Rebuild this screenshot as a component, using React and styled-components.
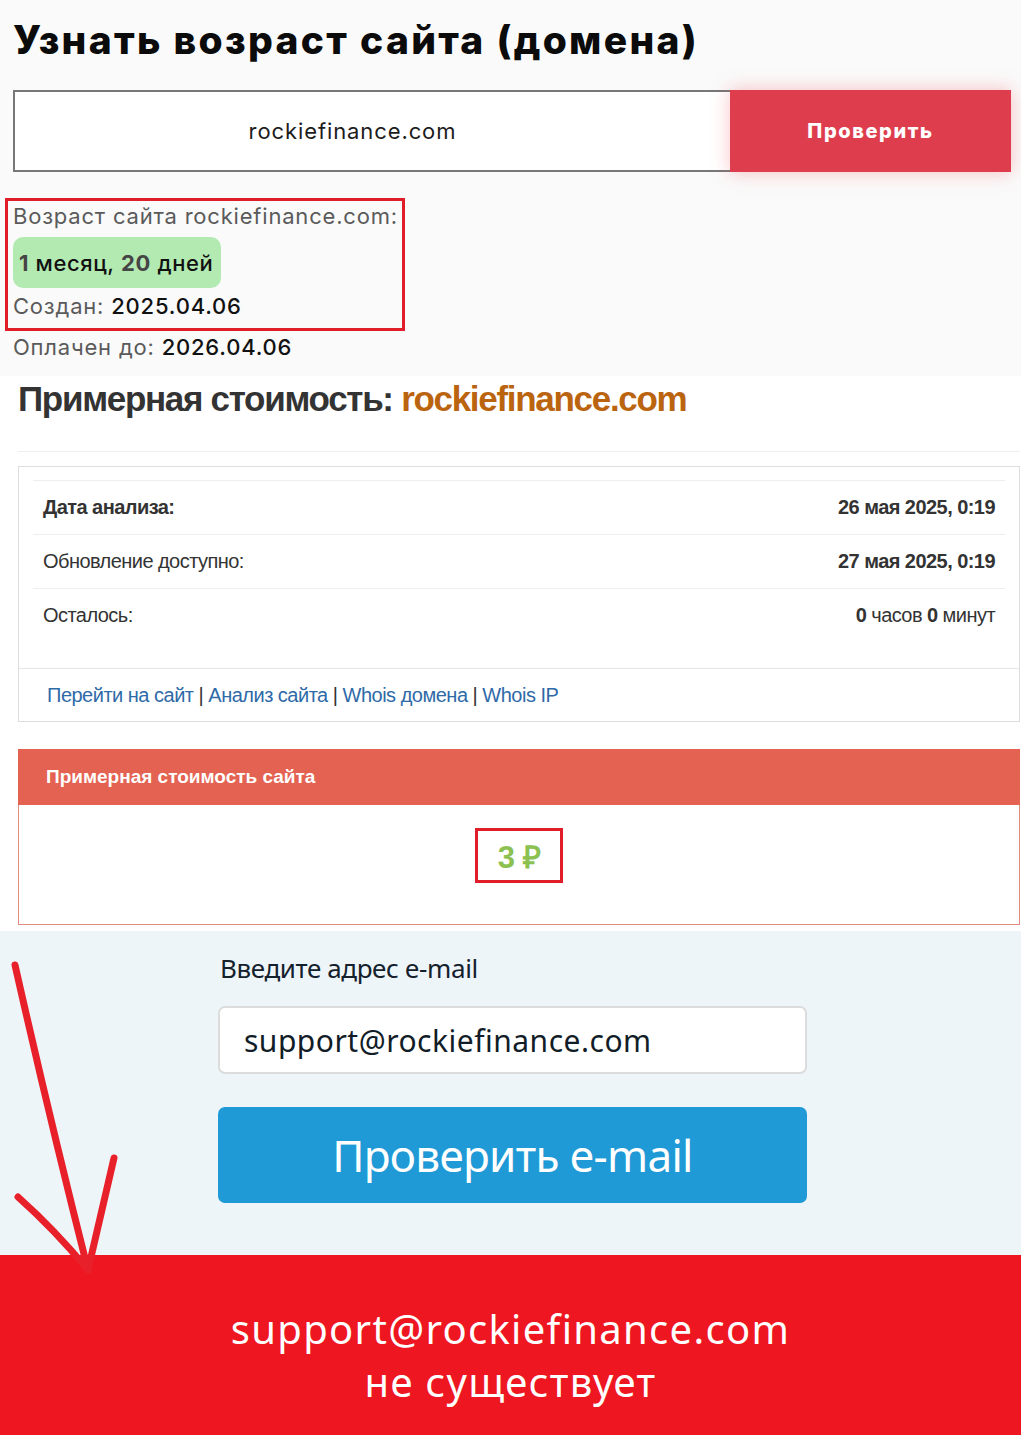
import React from 'react';
import styled, { createGlobalStyle } from 'styled-components';

const GlobalStyle = createGlobalStyle`
    body {
        margin: 0;
        background: #fafafa;
        font-family: Inter, "Open Sans", sans-serif;
    }
    * {
        box-sizing: border-box;
    }
`;

const Page = styled.div`
    position: relative;
    width: 1021px;
    min-height: 1435px;
    overflow: hidden;
`;

// --- Age checker ---
const AgeSection = styled.section`
    background: #fafafa;
    padding: 16px 10px 13px 13px;
`;

const Title = styled.h1`
    margin: 0;
    font-family: Inter, sans-serif;
    font-weight: 800;
    font-size: 39px;
    line-height: 48px;
    color: #0b0b0b;
    letter-spacing: 2.3px;
`;

const SearchRow = styled.form`
    display: flex;
    margin-top: 26px;
    height: 82px;
`;

const DomainInput = styled.div`
    flex: 1;
    display: flex;
    align-items: center;
    justify-content: center;
    padding-right: 40px;
    background: #fff;
    border: 2px solid #777;
    border-right: none;
    font-size: 22px;
    letter-spacing: 0.9px;
    color: #1c1c1c;
`;

const CheckButton = styled.button`
    width: 281px;
    border: none;
    background: #dd3d4d;
    color: #fff;
    font-family: Inter, sans-serif;
    font-weight: 800;
    font-size: 20px;
    letter-spacing: 1.6px;
    box-shadow: 0 0 18px rgba(240, 80, 90, 0.35);
`;

const Highlight = styled.div`
    width: 400px;
    margin: 26px 0 0 -8px;
    border: 3px solid #e01e2a;
    padding: 0 5px 3px;
`;

const InfoLine = styled.div`
    font-size: 22px;
    line-height: ${(p) => p.$lh || 30}px;
    letter-spacing: 0.8px;
    color: #5a5a5a;
    white-space: nowrap;

    b {
        font-weight: 500;
        color: #111;
    }
`;

const AgeBadge = styled.div`
    display: inline-flex;
    align-items: center;
    height: 51px;
    margin-top: 6px;
    padding: 0 8px 0 6px;
    background: #b3eab2;
    border-radius: 10px;
    font-size: 22px;
    font-weight: 500;
    letter-spacing: 0.6px;
    color: #111;

    strong {
        color: #454545;
        font-weight: 700;
    }
`;

// --- Price estimate ---
const PriceSection = styled.section`
    background: #fff;
    padding: 3px 1px 6px 18px;
    font-family: "Liberation Sans", Arial, sans-serif;
`;

const PriceHeading = styled.h2`
    margin: 0;
    font-size: 35px;
    line-height: 40px;
    font-weight: 700;
    letter-spacing: -1.3px;
    color: #333;

    span {
        color: #bb6410;
    }
`;

const Rule = styled.hr`
    margin: 32px 0 14px;
    border: none;
    border-top: 1px solid #eee;
`;

const Card = styled.div`
    background: #fff;
    border: 1px solid #ddd;
`;

const Table = styled.div`
    padding: 13px 14px 26px;
`;

const TableRow = styled.div`
    display: flex;
    justify-content: space-between;
    align-items: center;
    height: 54px;
    padding: 0 10px;
    border-top: 1px solid #eee;
    font-size: 20px;
    letter-spacing: -0.55px;
    color: #333;
    font-weight: ${(p) => (p.$bold ? 700 : 400)};

    b {
        font-weight: 700;
    }
`;

const Value = styled.span`
    font-weight: ${(p) => (p.$bold ? 700 : 400)};
`;

const CardFooter = styled.div`
    height: 53px;
    display: flex;
    align-items: center;
    padding: 0 28px;
    border-top: 1px solid #e6e6e6;
    font-size: 20px;
    letter-spacing: -0.5px;
    color: #333;

    a {
        color: #2f6aa8;
        text-decoration: none;
    }
`;

const CostCard = styled.div`
    margin-top: 27px;
`;

const CostHeader = styled.div`
    height: 56px;
    display: flex;
    align-items: center;
    padding: 0 28px;
    background: #e46251;
    color: #fff;
    font-weight: 700;
    font-size: 19px;
`;

const CostBody = styled.div`
    height: 120px;
    display: flex;
    justify-content: center;
    padding-top: 23px;
    border: 1px solid #e08a80;
    border-top: none;
`;

const CostValue = styled.div`
    width: 88px;
    height: 55px;
    display: flex;
    align-items: center;
    justify-content: center;
    border: 3px solid #e01e2a;
    color: #8cc152;
    font-weight: 700;
    font-size: 31px;
    letter-spacing: -0.5px;
`;

// --- Email checker ---
const EmailSection = styled.section`
    background: #eef5f9;
    padding: 22px 0 52px 218px;
    font-family: "Noto Sans", "Open Sans", sans-serif;
`;

const EmailColumn = styled.div`
    width: 589px;
`;

const EmailLabel = styled.label`
    display: block;
    padding-left: 2px;
    font-size: 26px;
    line-height: 30px;
    color: #14212d;
    letter-spacing: -0.4px;
`;

const EmailInput = styled.div`
    height: 68px;
    margin-top: 23px;
    display: flex;
    align-items: center;
    padding: 0 24px;
    background: #fff;
    border: 2px solid #dcdcdc;
    border-radius: 7px;
    font-size: 30px;
    color: #121d28;
    letter-spacing: 0.5px;
`;

const EmailButton = styled.button`
    width: 100%;
    height: 96px;
    margin-top: 33px;
    border: none;
    border-radius: 7px;
    background: #1f9ad6;
    color: #fff;
    font-family: "Noto Sans", "Open Sans", sans-serif;
    font-size: 44px;
    letter-spacing: -0.7px;
`;

const ResultBanner = styled.section`
    background: #ee1620;
    padding: 47px 0 27px;
    text-align: center;
    color: #fff;
    font-family: "Noto Sans", "Open Sans", sans-serif;
    font-size: 40px;
    line-height: 53px;
    letter-spacing: 1.3px;
`;

const Arrow = styled.svg`
    position: absolute;
    left: 0;
    top: 950px;
    pointer-events: none;
`;

export default function App() {
    return (
        <Page>
            <GlobalStyle />
            <AgeSection>
                <Title>Узнать возраст сайта (домена)</Title>
                <SearchRow onSubmit={(e) => e.preventDefault()}>
                    <DomainInput>rockiefinance.com</DomainInput>
                    <CheckButton type="submit">Проверить</CheckButton>
                </SearchRow>
                <Highlight>
                    <InfoLine>Возраст сайта rockiefinance.com:</InfoLine>
                    <AgeBadge>
                        <strong>1</strong>&nbsp;месяц,&nbsp;<strong>20</strong>&nbsp;дней
                    </AgeBadge>
                    <InfoLine $lh={37}>
                        Создан: <b>2025.04.06</b>
                    </InfoLine>
                </Highlight>
                <InfoLine $lh={32}>
                    Оплачен до: <b>2026.04.06</b>
                </InfoLine>
            </AgeSection>

            <PriceSection>
                <PriceHeading>
                    Примерная стоимость: <span>rockiefinance.com</span>
                </PriceHeading>
                <Rule />
                <Card>
                    <Table>
                        <TableRow $bold>
                            <span>Дата анализа:</span>
                            <Value $bold>26 мая 2025, 0:19</Value>
                        </TableRow>
                        <TableRow>
                            <span>Обновление доступно:</span>
                            <Value $bold>27 мая 2025, 0:19</Value>
                        </TableRow>
                        <TableRow>
                            <span>Осталось:</span>
                            <Value>
                                <b>0</b> часов <b>0</b> минут
                            </Value>
                        </TableRow>
                    </Table>
                    <CardFooter>
                        <a href="#site">Перейти на сайт</a>&nbsp;|&nbsp;
                        <a href="#analysis">Анализ сайта</a>&nbsp;|&nbsp;
                        <a href="#whois">Whois домена</a>&nbsp;|&nbsp;
                        <a href="#ip">Whois IP</a>
                    </CardFooter>
                </Card>
                <CostCard>
                    <CostHeader>Примерная стоимость сайта</CostHeader>
                    <CostBody>
                        <CostValue>3 ₽</CostValue>
                    </CostBody>
                </CostCard>
            </PriceSection>

            <EmailSection>
                <EmailColumn>
                    <EmailLabel>Введите адрес e-mail</EmailLabel>
                    <EmailInput>support@rockiefinance.com</EmailInput>
                    <EmailButton type="button">Проверить e-mail</EmailButton>
                </EmailColumn>
            </EmailSection>

            <ResultBanner>
                <div>support@rockiefinance.com</div>
                <div>не существует</div>
            </ResultBanner>

            <Arrow width="130" height="330" viewBox="0 0 130 330">
                <g stroke="#e8202a" strokeWidth="7" strokeLinecap="round" fill="none">
                    <path d="M15 15 Q50 170 88 320" />
                    <path d="M114 208 L88 320" />
                    <path d="M18 247 Q55 280 88 320" />
                </g>
            </Arrow>
        </Page>
    );
}
